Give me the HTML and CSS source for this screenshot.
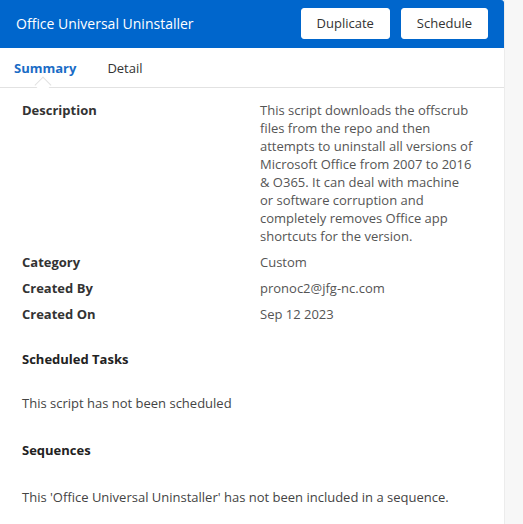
FILE: index.html
```html
<!DOCTYPE html>
<html>
<head>
<meta charset="utf-8">
<link rel="stylesheet" href="styles.css">
</head>
<body>
<div class="panel">
  <header class="topbar">
    <h1 class="title">Office Universal Uninstaller</h1>
    <div class="actions">
      <button class="btn">Duplicate</button>
      <button class="btn">Schedule</button>
    </div>
  </header>
  <nav class="tabs">
    <span class="tab active">Summary</span>
    <span class="tab">Detail</span>
  </nav>
  <main class="content">
    <dl class="props">
      <dt>Description</dt>
      <dd>This script downloads the offscrub files from the repo and then attempts to uninstall all versions of Microsoft Office from 2007 to 2016 &amp; O365. It can deal with machine or software corruption and completely removes Office app shortcuts for the version.</dd>
      <dt>Category</dt>
      <dd>Custom</dd>
      <dt>Created By</dt>
      <dd>pronoc2@jfg-nc.com</dd>
      <dt>Created On</dt>
      <dd>Sep 12 2023</dd>
    </dl>
    <h2 class="section">Scheduled Tasks</h2>
    <p class="note">This script has not been scheduled</p>
    <h2 class="section section-late">Sequences</h2>
    <p class="note note-late">This 'Office Universal Uninstaller' has not been included in a sequence.</p>
  </main>
</div>
</body>
</html>
```

FILE: styles.css
```css
html, body {
  margin: 0;
  padding: 0;
}
body {
  background: #f7f7f7;
  font-family: "Open Sans", "Liberation Sans", sans-serif;
  font-size: 13px;
  line-height: 18px;
  color: #4a4a4a;
}
.panel {
  width: 504px;
  min-height: 524px;
  background: #fff;
  border-right: 1px solid #ececec;
}
.topbar {
  height: 48px;
  background: #0066cc;
  border-top-right-radius: 3px;
  display: flex;
  align-items: center;
  justify-content: space-between;
  padding: 0 16px 0 16px;
  box-sizing: border-box;
}
.title {
  margin: 0;
  font-size: 14px;
  font-weight: 400;
  color: #fff;
  line-height: 20px;
}
.actions {
  display: flex;
  gap: 11px;
  margin-top: -1px;
}
.btn {
  font-family: "Open Sans", "Liberation Sans", sans-serif;
  font-size: 13px;
  color: #333;
  background: #fff;
  border: 1px solid #fff;
  border-radius: 3px;
  height: 31px;
  padding: 0 15px;
  line-height: 29px;
}
.tabs {
  position: relative;
  height: 39px;
  border-bottom: 1px solid #e2e2e2;
  display: flex;
  align-items: center;
  gap: 31px;
  padding: 0 14px;
  box-sizing: content-box;
}
.tab {
  color: #333;
  font-size: 13px;
}
.tab.active {
  color: #1a6cc6;
  font-weight: 700;
  position: relative;
}
.tab.active::after {
  content: "";
  position: absolute;
  left: 23px;
  bottom: -14px;
  width: 11px;
  height: 11px;
  background: #fff;
  border-left: 1px solid #e2e2e2;
  border-top: 1px solid #e2e2e2;
  transform: rotate(45deg);
}
.content {
  padding: 13px 30px 0 22px;
}
.props {
  margin: 0;
  display: grid;
  grid-template-columns: 238px 214px;
  row-gap: 8px;
}
.props dt {
  font-weight: 700;
  color: #333;
}
.props dd {
  margin: 0;
  color: #555;
}
.section {
  margin: 27px 0 0 0;
  font-size: 13px;
  line-height: 18px;
  font-weight: 700;
  color: #222;
}
.note {
  margin: 26px 0 0 0;
  color: #444;
}
.section-late {
  margin-top: 29px;
}
.note-late {
  margin-top: 29px;
}
```
